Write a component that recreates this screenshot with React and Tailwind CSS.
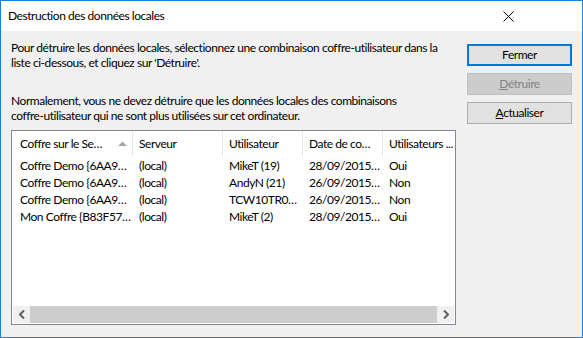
const rows = [
  ['Coffre Demo {6AA9…', '(local)', 'MikeT (19)', '28/09/2015…', 'Oui'],
  ['Coffre Demo {6AA9…', '(local)', 'AndyN (21)', '26/09/2015…', 'Non'],
  ['Coffre Demo {6AA9…', '(local)', 'TCW10TR0…', '26/09/2015…', 'Non'],
  ['Mon Coffre {B83F57…', '(local)', 'MikeT (2)', '28/09/2015…', 'Oui'],
];

const cols = ['w-[121px] pl-[8px]', 'w-[90px] pl-[6px]', 'w-[80px] pl-[6px]', 'w-[80px] pl-[6px]', 'w-[80px] pl-[6px]'];

export default function App() {
  return (
    <div className="w-[583px] h-[338px] border border-[#1883d7] bg-[#f0f0f0] flex flex-col text-[12px] tracking-[-0.45px] text-black font-['Lato',sans-serif] overflow-hidden">
      {/* title bar */}
      <div className="h-[30px] bg-white flex items-center justify-between pl-[7px] pr-[68px] shrink-0">
        <span className="leading-none">Destruction des données locales</span>
        <svg width="11" height="11" viewBox="0 0 11 11">
          <path d="M0.5 0.5 L10.5 10.5 M10.5 0.5 L0.5 10.5" stroke="#000" strokeWidth="1" fill="none" />
        </svg>
      </div>

      <div className="flex-1 flex px-[10px] pt-[9px] gap-[11px]">
        <div className="w-[445px] flex flex-col">
          <p className="leading-[15px] whitespace-nowrap">
            Pour détruire les données locales, sélectionnez une combinaison coffre-utilisateur dans la<br />
            liste ci-dessous, et cliquez sur 'Détruire'.
          </p>
          <p className="leading-[15px] mt-[23px] whitespace-nowrap">
            Normalement, vous ne devez détruire que les données locales des combinaisons<br />
            coffre-utilisateur qui ne sont plus utilisées sur cet ordinateur.
          </p>

          {/* list view */}
          <div className="mt-[7px] h-[195px] border border-[#828790] bg-white flex flex-col">
            <div className="flex h-[25px] shrink-0">
              <div className={`${cols[0]} shrink-0 flex items-center border-r border-[#e5e5e5]`}>
                <span className="whitespace-nowrap">Coffre sur le Se…</span>
                <svg className="ml-auto mr-[5px]" width="9" height="5" viewBox="0 0 9 5">
                  <path d="M0 5 L4.5 0.5 L9 5 Z" fill="#a3a3a3" />
                </svg>
              </div>
              <div className={`${cols[1]} shrink-0 flex items-center border-r border-[#e5e5e5]`}>Serveur</div>
              <div className={`${cols[2]} shrink-0 flex items-center border-r border-[#e5e5e5]`}>Utilisateur</div>
              <div className={`${cols[3]} shrink-0 flex items-center border-r border-[#e5e5e5]`}>Date de co…</div>
              <div className={`${cols[4]} shrink-0 flex items-center whitespace-nowrap overflow-hidden`}>Utilisateurs ...</div>
            </div>
            <div className="flex-1 pt-[1px]">
              {rows.map((r, i) => (
                <div key={i} className="flex h-[17px] items-center">
                  {r.map((c, j) => (
                    <div key={j} className={`${cols[j]} shrink-0 whitespace-nowrap`}>{c}</div>
                  ))}
                </div>
              ))}
            </div>
            {/* horizontal scrollbar */}
            <div className="h-[17px] mx-[1px] mb-[1px] bg-[#f0f0f0] flex items-center">
              <div className="w-[17px] h-full flex items-center justify-center">
                <svg width="6" height="9" viewBox="0 0 6 9">
                  <path d="M5 0.5 L1 4.5 L5 8.5" stroke="#606060" strokeWidth="2" fill="none" />
                </svg>
              </div>
              <div className="flex-1 h-full bg-[#cdcdcd]" />
              <div className="w-[17px] h-full flex items-center justify-center">
                <svg width="6" height="9" viewBox="0 0 6 9">
                  <path d="M1 0.5 L5 4.5 L1 8.5" stroke="#606060" strokeWidth="2" fill="none" />
                </svg>
              </div>
            </div>
          </div>
        </div>

        <div className="w-[105px] flex flex-col gap-[7px] pt-[4px]">
          <button className="h-[22px] border-2 border-[#0078d7] bg-[#e1e1e1] flex items-center justify-center">Fermer</button>
          <button className="h-[22px] border border-[#bfbfbf] bg-[#cccccc] text-[#838383] flex items-center justify-center">
            <span><span className="underline">D</span>étruire</span>
          </button>
          <button className="h-[22px] border border-[#adadad] bg-[#e1e1e1] flex items-center justify-center">
            <span><span className="underline">A</span>ctualiser</span>
          </button>
        </div>
      </div>
    </div>
  );
}
